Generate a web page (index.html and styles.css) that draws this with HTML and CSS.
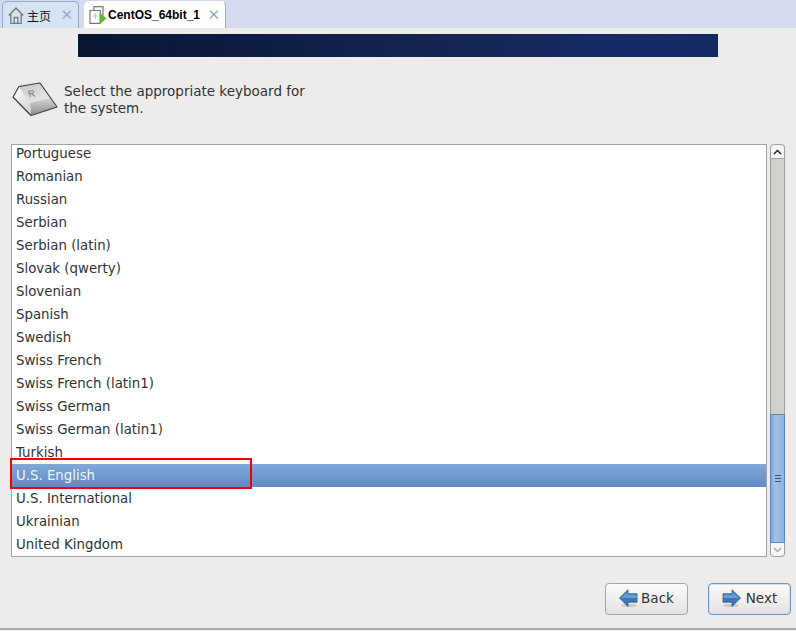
FILE: index.html
```html
<!DOCTYPE html>
<html lang="en">
<head>
<meta charset="utf-8">
<title>CentOS keyboard selection</title>
<link rel="stylesheet" href="styles.css">
</head>
<body>
<div class="tabbar">
  <div class="tab tab-home">
    <svg class="tab-icon" width="16" height="17" viewBox="0 0 16 17"><path d="M.8 8.500 8 1l7.200 7.500M2.800 6.800v9.500h10.400V6.800M6.200 16.300V10.500h3.600v5.800" fill="none" stroke="#777" stroke-width="1.300"/></svg>
    <span class="tab-label">主页</span>
    <span class="tab-close">✕</span>
  </div>
  <div class="tab tab-active">
    <svg class="tab-icon" width="18" height="19" viewBox="0 0 18 19"><path d="M5 4V.7h9v9" fill="none" stroke="#777" stroke-width="1.200"/><path d="M1 4.500h10.500v12.800H1z" fill="#fff" stroke="#777" stroke-width="1.200"/><path d="M3.500 10h6M6.500 7v6" stroke="#b9c4cf" fill="none"/><path d="M10.500 6.500 17.500 12.500 10.500 18.500z" fill="#5dbb2c"/></svg>
    <span class="tab-label tab-label-strong">CentOS_64bit_1</span>
    <span class="tab-close">✕</span>
  </div>
</div>
<main class="installer">
  <div class="banner"></div>
  <div class="intro">
    <svg class="key-icon" width="46" height="36" viewBox="0 0 46 36">
      <defs>
        <linearGradient id="keyFront" x1="0" y1="0" x2="0" y2="1"><stop offset="0" stop-color="#d6d6d6"/><stop offset="1" stop-color="#8e8e8e"/></linearGradient>
        <linearGradient id="keyTop" x1="0" y1="0" x2="1" y2="1"><stop offset="0" stop-color="#c4c4c4"/><stop offset="1" stop-color="#eeeeee"/></linearGradient>
        <linearGradient id="keyLeft" x1="0" y1="0" x2="1" y2="1"><stop offset="0" stop-color="#ffffff"/><stop offset="1" stop-color="#cfcfcf"/></linearGradient>
      </defs>
      <path d="M7 5 28 2 38 16 18 21z" fill="url(#keyTop)"/>
      <path d="M18 21 38 16 44 25 19 33z" fill="url(#keyFront)"/>
      <path d="M1 15 7 5 18 21 19 33z" fill="url(#keyLeft)"/>
      <path d="M28 2 38 16 44 25 45 25z" fill="#f3f3f3"/>
      <path d="M16 9.500 21 8.500M17 9.500 18.500 15M16.500 12 21.500 11M21 8.500 21.500 11M19.500 11.500 23 14.500" fill="none" stroke="#8a8a8a" stroke-width="1.100"/>
      <path d="M1 15 7 4.500 28 1 45 25 19 33.500 z" fill="none" stroke="#333" stroke-width="1.100" stroke-linejoin="round"/>
    </svg>
    <p class="intro-text">Select the appropriate keyboard for<br>the system.</p>
  </div>
  <div class="picker">
    <ul class="list">
      <li>Portuguese</li>
      <li>Romanian</li>
      <li>Russian</li>
      <li>Serbian</li>
      <li>Serbian (latin)</li>
      <li>Slovak (qwerty)</li>
      <li>Slovenian</li>
      <li>Spanish</li>
      <li>Swedish</li>
      <li>Swiss French</li>
      <li>Swiss French (latin1)</li>
      <li>Swiss German</li>
      <li>Swiss German (latin1)</li>
      <li>Turkish</li>
      <li class="selected">U.S. English</li>
      <li>U.S. International</li>
      <li>Ukrainian</li>
      <li>United Kingdom</li>
    </ul>
    <div class="scrollbar">
      <div class="scroll-btn scroll-up">
        <svg width="9" height="6" viewBox="0 0 9 6"><path d="M1 5 4.500 1.500 8 5" fill="none" stroke="#222" stroke-width="1.500"/></svg>
      </div>
      <div class="trough"></div>
      <div class="thumb"><span class="grip"></span><span class="grip"></span><span class="grip"></span></div>
      <div class="scroll-btn scroll-down">
        <svg width="9" height="6" viewBox="0 0 9 6"><path d="M1 1 4.500 4.500 8 1" fill="none" stroke="#aaa" stroke-width="1.500"/></svg>
      </div>
    </div>
    <div class="highlight-box"></div>
  </div>
  <div class="actions">
    <button class="btn" type="button">
      <svg width="19" height="19" viewBox="0 0 19 19"><ellipse cx="10" cy="16.500" rx="8" ry="1.500" fill="#c4c4c4"/><path d="M.5 9 9 .8v4h9v8.400H9v4.200z" fill="#3b77b8" stroke="#2a5a94" stroke-width=".8"/><path d="M2 9 8.500 2.800v3h9V9z" fill="#6c9dd0"/></svg>
      <span>Back</span>
    </button>
    <button class="btn btn-default" type="button">
      <svg width="19" height="19" viewBox="0 0 19 19"><ellipse cx="9" cy="16.500" rx="8" ry="1.500" fill="#c4c4c4"/><path d="M18.500 9 10 .8v4H1v8.400h9v4.200z" fill="#3b77b8" stroke="#2a5a94" stroke-width=".8"/><path d="M17 9 10.500 2.800v3h-9V9z" fill="#6c9dd0"/></svg>
      <span>Next</span>
    </button>
  </div>
</main>
<div class="footer-line"></div>
</body>
</html>
```
FILE: styles.css
```css
* { box-sizing: border-box; }
html, body { margin: 0; padding: 0; }
body {
  width: 796px;
  height: 631px;
  overflow: hidden;
  background: #edecea;
  font-family: "DejaVu Sans", sans-serif;
  font-size: 13.5px;
  color: #2e3436;
  display: flex;
  flex-direction: column;
}
.tabbar {
  height: 28px;
  flex: none;
  background: #d5daee;
  display: flex;
  align-items: flex-end;
  padding-left: 2px;
  gap: 5px;
}
.tab {
  height: 27px;
  display: flex;
  align-items: center;
  border: 1px solid #8fabc7;
  border-bottom: 0;
  border-radius: 5px 5px 0 0;
}
.tab-home {
  width: 77px;
  background: #d5e3f3;
  padding-left: 5px;
}
.tab-active {
  width: 142px;
  background: #fff;
  border-color: #fff #8fabc7 #fff #fff;
  padding-left: 4px;
}
.tab-icon { flex: none; }
.tab-label {
  font-family: "Noto Sans CJK SC", sans-serif;
  font-size: 12px;
  color: #111;
  margin-left: 3px;
}
.tab-label-strong {
  margin-left: 1px;
  font-family: "Liberation Sans", sans-serif;
  font-weight: bold;
  font-size: 12px;
  color: #000;
  white-space: nowrap;
}
.tab-close {
  margin-left: auto;
  margin-right: 5px;
  font-family: "DejaVu Sans", sans-serif;
  font-size: 15px;
  line-height: 1;
  font-weight: bold;
  color: #8eb0cc;
}
.installer {
  flex: 1;
  display: flex;
  flex-direction: column;
  padding: 6px 5px 0 11px;
}
.banner {
  height: 23px;
  width: 640px;
  margin-left: 67px;
  flex: none;
  background: linear-gradient(90deg, #0a1531 0%, #0e1c44 25%, #14244f 50%, #162c69 88%, #152962 100%);
}
.intro {
  display: flex;
  align-items: center;
  height: 34px;
  margin-top: 26px;
  margin-left: 1px;
}
.key-icon { flex: none; width: 46px; height: 36px; }
.intro-text {
  margin: 0 0 0 6px;
  line-height: 17px;
}
.picker {
  position: relative;
  margin-top: 27px;
  display: flex;
  height: 413px;
  gap: 3px;
}
.list {
  list-style: none;
  margin: 0;
  padding: 0;
  width: 756px;
  background: #fff;
  border: 1px solid #a3a3a1;
  overflow: hidden;
  font-size: 13.33px;
}
.list li {
  height: 23px;
  line-height: 23px;
  padding-left: 4px;
  white-space: nowrap;
}
.list li:first-child { margin-top: -3px; }
.list .selected {
  background: linear-gradient(180deg, #80a8d8 0%, #5f8bc2 100%);
  color: #f0f4fa;
}
.scrollbar {
  width: 15px;
  display: flex;
  flex-direction: column;
  border-left: 1px solid #9f9f9d;
  border-right: 1px solid #9f9f9d;
  border-radius: 4px;
}
.scroll-btn {
  height: 14px;
  flex: none;
  background: #f7f7f6;
  display: flex;
  align-items: center;
  justify-content: center;
}
.scroll-up { border-top: 1px solid #9f9f9d; border-radius: 4px 4px 0 0; }
.scroll-down { border-bottom: 1px solid #9f9f9d; border-radius: 0 0 4px 4px; }
.trough { flex: 1; background: #d2d0cd; border-top: 1px solid #a9a9a7; }
.thumb {
  height: 129px;
  flex: none;
  background: linear-gradient(90deg, #7fa6db 0%, #a2c0e6 35%, #8fb2df 100%);
  border: 1px solid #5f83b5;
  margin: 0 -1px;
  display: flex;
  flex-direction: column;
  align-items: center;
  justify-content: center;
  gap: 2px;
}
.grip { width: 6px; height: 1px; background: #33527c; }
.highlight-box {
  position: absolute;
  left: -1px;
  top: 314px;
  width: 242px;
  height: 31px;
  border: 2px solid #f00000;
}
.actions {
  margin-top: 26px;
  display: flex;
  justify-content: flex-end;
  gap: 20px;
}
.btn {
  width: 83px;
  height: 32px;
  display: flex;
  align-items: center;
  justify-content: center;
  gap: 3px;
  padding: 0 0 2px;
  border: 1px solid #a5a5a3;
  border-radius: 4px;
  background: linear-gradient(180deg, #fbfbfa 0%, #f0efee 50%, #e3e2e0 100%);
  font-family: "DejaVu Sans", sans-serif;
  font-size: 13.5px;
  color: #2e3436;
}
.btn-default {
  border-color: #6f97c6;
  box-shadow: inset 0 0 0 1px #cfdded;
  gap: 5px;
}
.footer-line {
  height: 2px;
  flex: none;
  margin-bottom: 1px;
  background: #a9a9a7;
}
```
